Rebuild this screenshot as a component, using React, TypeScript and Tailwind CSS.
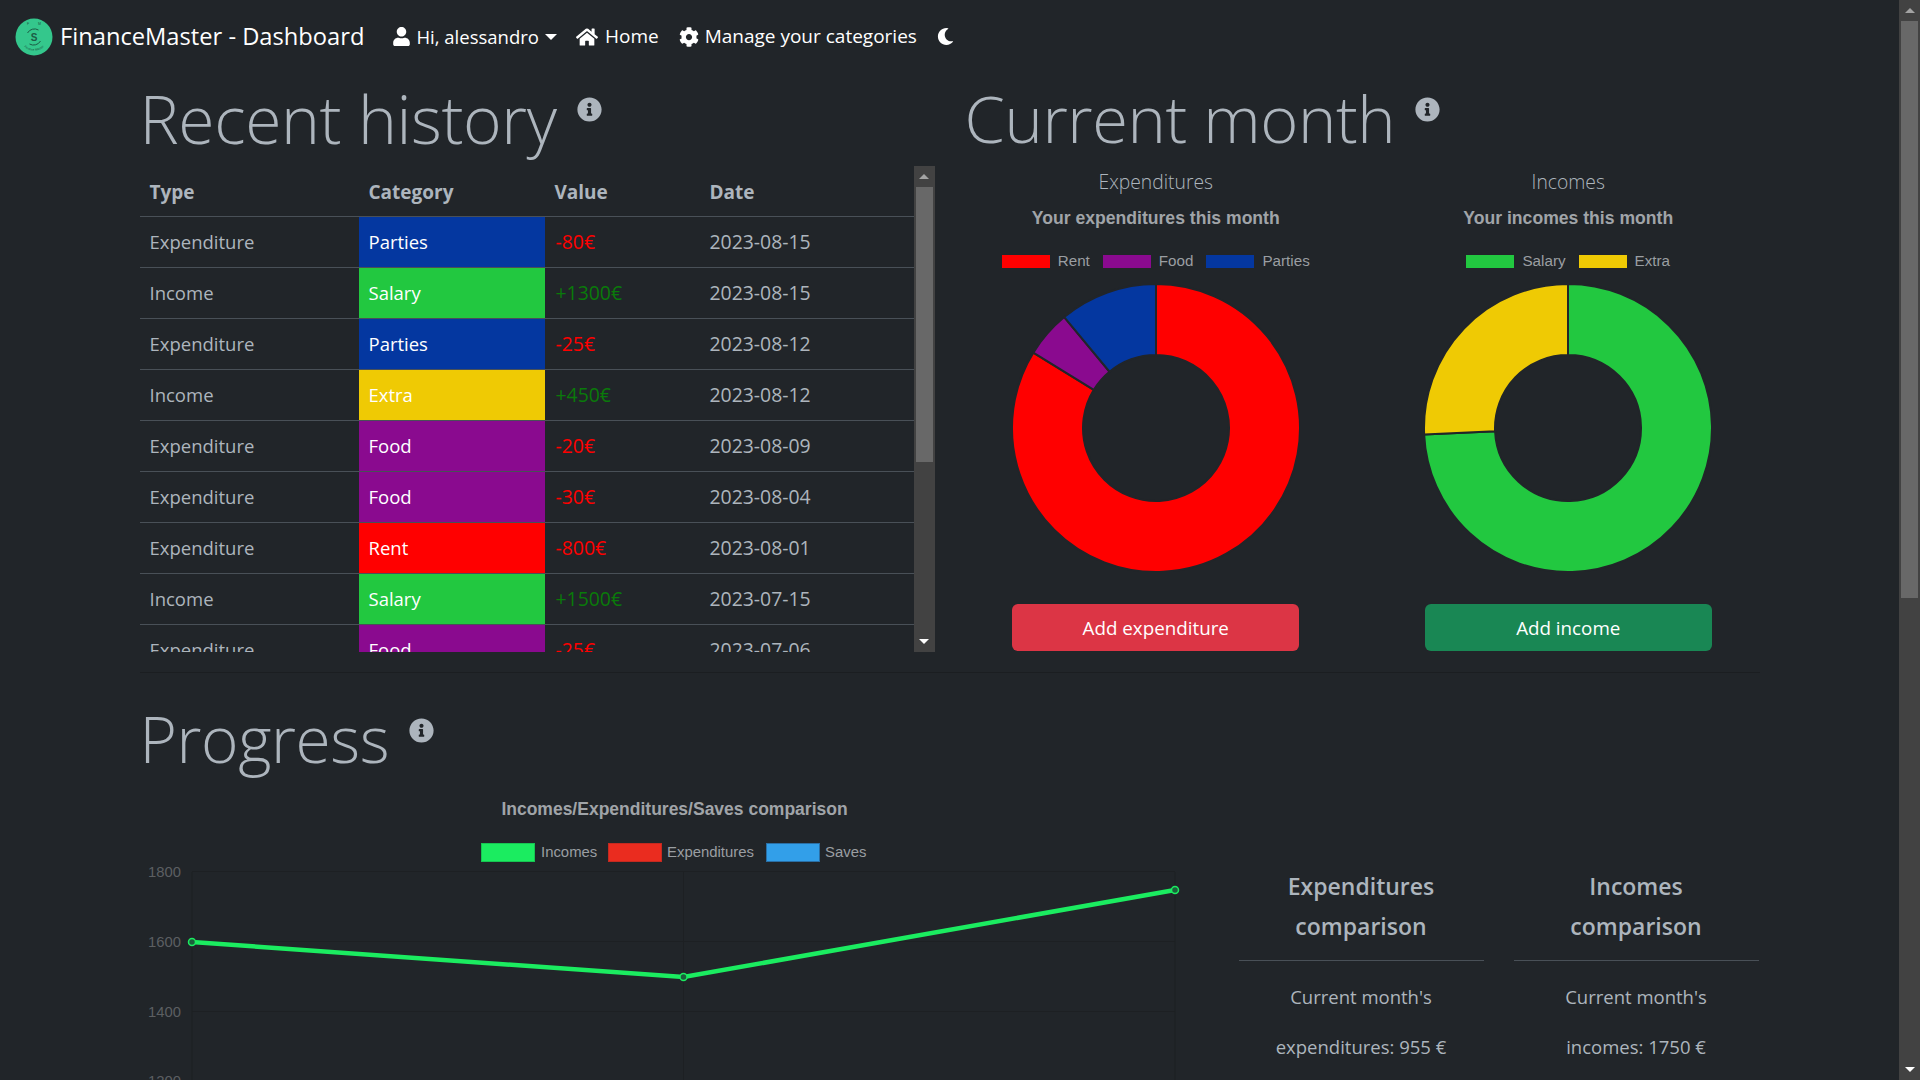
import { FaCog, FaHome, FaInfoCircle, FaMoon, FaUser } from "react-icons/fa"

const rows = [
  { type: "Expenditure", category: "Parties", color: "bg-[#0437a0]", value: "-80€", date: "2023-08-15" },
  { type: "Income", category: "Salary", color: "bg-[#22c840]", value: "+1300€", date: "2023-08-15" },
  { type: "Expenditure", category: "Parties", color: "bg-[#0437a0]", value: "-25€", date: "2023-08-12" },
  { type: "Income", category: "Extra", color: "bg-[#efca04]", value: "+450€", date: "2023-08-12" },
  { type: "Expenditure", category: "Food", color: "bg-[#8a0a8f]", value: "-20€", date: "2023-08-09" },
  { type: "Expenditure", category: "Food", color: "bg-[#8a0a8f]", value: "-30€", date: "2023-08-04" },
  { type: "Expenditure", category: "Rent", color: "bg-[#ff0000]", value: "-800€", date: "2023-08-01" },
  { type: "Income", category: "Salary", color: "bg-[#22c840]", value: "+1500€", date: "2023-07-15" },
  { type: "Expenditure", category: "Food", color: "bg-[#8a0a8f]", value: "-25€", date: "2023-07-06" },
]

const expenditures = [
  { label: "Rent", value: 800, color: "#ff0000" },
  { label: "Food", value: 50, color: "#8a0a8f" },
  { label: "Parties", value: 105, color: "#0437a0" },
]

const incomes = [
  { label: "Salary", value: 1300, color: "#22c840" },
  { label: "Extra", value: 450, color: "#efca04" },
]

type Slice = { label: string; value: number; color: string }

function arcPath(start: number, end: number, outer: number, inner: number, c: number) {
  const pt = (r: number, a: number) => `${c + r * Math.sin(a)} ${c - r * Math.cos(a)}`
  const large = end - start > Math.PI ? 1 : 0
  return `M${pt(outer, start)} A${outer} ${outer} 0 ${large} 1 ${pt(outer, end)} L${pt(inner, end)} A${inner} ${inner} 0 ${large} 0 ${pt(inner, start)} Z`
}

function Donut({ data }: { data: Slice[] }) {
  const total = data.reduce((sum, d) => sum + d.value, 0)
  let angle = 0
  return (
    <svg width="288" height="288" viewBox="0 0 288 288" className="block">
      {data.map((d) => {
        const start = angle
        angle += (d.value / total) * Math.PI * 2
        return <path key={d.label} d={arcPath(start, angle, 144, 73, 144)} fill={d.color} stroke="#212529" strokeWidth="2" />
      })}
    </svg>
  )
}

function Heading({ children, size }: { children: string; size: string }) {
  return (
    <div className="flex h-[93px] items-start text-[#adb5bd]">
      <h1 className={`leading-[90px] font-light tracking-[-0.4px] ${size}`}>{children}</h1>
      <FaInfoCircle className="mt-[24px] ml-[20px] text-[25px]" />
    </div>
  )
}

function MonthColumn({ label, title, data, button, buttonColor }: { label: string; title: string; data: Slice[]; button: string; buttonColor: string }) {
  return (
    <div className="flex flex-col items-center">
      <div className="flex h-[32px] items-center text-[19.3px] font-light text-[#adb5bd]">{label}</div>
      <div className="mt-[3px] flex h-[35px] items-center font-['Liberation_Sans',Arial,sans-serif] text-[17.6px] font-bold text-[#a0a4a8]">{title}</div>
      <div className="mt-[16px] flex h-[18px] items-center gap-[8px] font-['Liberation_Sans',Arial,sans-serif] text-[15.2px] text-[#9a9ea2]">
        {data.map((d, i) => (
          <span key={d.label} className={`flex items-center gap-[8px] ${i < data.length - 1 ? "mr-[5px]" : ""}`}>
            <span className="h-[13px] w-[48px]" style={{ background: d.color }} />
            {d.label}
          </span>
        ))}
      </div>
      <div className="mt-[14px]">
        <Donut data={data} />
      </div>
      <button className={`mt-[32px] h-[47px] w-[287px] rounded-[6px] pt-[2px] text-[18.8px] text-white ${buttonColor}`}>{button}</button>
    </div>
  )
}

function Logo() {
  return (
    <svg width="38" height="38" viewBox="0 0 38 38" className="block shrink-0">
      <circle cx="19" cy="19" r="18.5" fill="#34c78c" />
      <path d="M12.5 15a8 8 0 0 1 11-3M25.5 23a8 8 0 0 1-11 3" fill="none" stroke="#1c5b45" strokeWidth="1" />
      <text x="19" y="22.5" textAnchor="middle" fontSize="10" fontWeight="700" fill="#1c5b45" fontFamily="Liberation Sans">S</text>
      <text x="12" y="7" fontSize="3.5" fill="#1c5b45" fontFamily="Liberation Sans">F</text>
      <text x="23" y="7" fontSize="3.5" fill="#1c5b45" fontFamily="Liberation Sans">M</text>
      <path id="logo-arc" d="M5 22a14.5 14.5 0 0 0 28 0" fill="none" />
      <text fontSize="3.2" fill="#1c5b45" fontFamily="Liberation Sans">
        <textPath href="#logo-arc" startOffset="50%" textAnchor="middle">Finance Master</textPath>
      </text>
    </svg>
  )
}

function LineChart() {
  const font = "Liberation Sans, Arial, sans-serif"
  return (
    <svg width="1070" height="320" viewBox="0 0 1070 320" className="block" fontFamily={font}>
      <text x="534.5" y="16" textAnchor="middle" fontSize="17.5" fontWeight="700" fill="#a0a4a8">Incomes/Expenditures/Saves comparison</text>
      <rect x="341.5" y="44.5" width="53" height="18" fill="#1bec60" stroke="#17c552" />
      <text x="401" y="58" fontSize="14.9" fill="#9a9ea2">Incomes</text>
      <rect x="468.5" y="44.5" width="53" height="18" fill="#ea2c1f" stroke="#c42a20" />
      <text x="527" y="58" fontSize="14.9" fill="#9a9ea2">Expenditures</text>
      <rect x="626.5" y="44.5" width="53" height="18" fill="#329fe9" stroke="#2a6fa5" />
      <text x="685" y="58" fontSize="14.9" fill="#9a9ea2">Saves</text>
      {[72.5, 142.5, 212.5, 281.5].map((y) => (
        <line key={y} x1="52" x2="1035" y1={y} y2={y} stroke="#1d2023" />
      ))}
      {[52, 543.5, 1035].map((x) => (
        <line key={x} x1={x} x2={x} y1="73" y2="320" stroke="#1d2023" />
      ))}
      {[["1800", 72.5], ["1600", 142.5], ["1400", 212], ["1200", 281.5]].map(([label, y]) => (
        <text key={label} x="41" y={Number(y) + 5.5} textAnchor="end" fontSize="14.8" fill="#5c5f62">{label}</text>
      ))}
      <polyline points="52,143 543.5,178 1035,91" fill="none" stroke="#1bec60" strokeWidth="4.5" />
      {[[52, 143], [543.5, 178], [1035, 91]].map(([x, y]) => (
        <circle key={x} cx={x} cy={y} r="3.5" fill="#1c5f3c" stroke="#1bec60" strokeWidth="1.5" />
      ))}
    </svg>
  )
}

function Comparison({ title, lines }: { title: string[]; lines: string[] }) {
  return (
    <div className="w-[245px] text-center text-[#adb5bd]">
      <div className="border-b border-[#495057] pb-[14px] text-[23px] leading-[40px] font-semibold">
        {title.map((t) => <div key={t}>{t}</div>)}
      </div>
      <div className="pt-[11px] text-[18.5px] leading-[50px]">
        {lines.map((l) => <div key={l}>{l}</div>)}
      </div>
    </div>
  )
}

function Scrollbar({ thumb }: { thumb: string }) {
  return (
    <div className="flex h-full w-[21px] shrink-0 flex-col items-center bg-[#424242]">
      <div className="flex h-[21px] w-full shrink-0 items-center justify-center">
        <div className="h-0 w-0 border-x-[5px] border-b-[5px] border-x-transparent border-b-[#a3a3a3]" />
      </div>
      <div className={`w-[17px] shrink-0 bg-[#686868] ${thumb}`} />
      <div className="flex-1" />
      <div className="flex h-[21px] w-full shrink-0 items-center justify-center">
        <div className="h-0 w-0 border-x-[5px] border-t-[5px] border-x-transparent border-t-white" />
      </div>
    </div>
  )
}

export default function App() {
  return (
    <div className="flex h-screen overflow-hidden bg-[#212529] font-['Open_Sans','Noto_Sans',sans-serif]">
      <div className="min-w-0 flex-1 overflow-hidden">
        <nav className="flex h-[73px] items-center pl-[15px] text-[19px] text-white">
          <Logo />
          <span className="ml-[7px] text-[23.7px] whitespace-nowrap">FinanceMaster - Dashboard</span>
          <FaUser className="ml-[28px] text-[19px]" />
          <span className="ml-[5px] text-[18.5px]">Hi, alessandro</span>
          <span className="ml-[6px] h-0 w-0 border-x-[6px] border-t-[6px] border-x-transparent border-t-white" />
          <FaHome className="ml-[19px] text-[22px]" />
          <span className="ml-[7px]">Home</span>
          <FaCog className="ml-[20px] text-[20px]" />
          <span className="ml-[6px]">Manage your categories</span>
          <FaMoon className="ml-[20px] text-[17px]" />
        </nav>

        <main className="mx-auto w-[1620px]">
          <div className="grid grid-cols-[795px_795px] gap-x-[30px]">
            <section>
              <Heading size="text-[66px]">Recent history</Heading>
              <div className="flex h-[486px]">
                <div className="h-full flex-1 overflow-hidden">
                  <table className="w-full table-fixed border-collapse text-[18.5px] text-[#adb5bd]">
                    <thead>
                      <tr className="h-[50px] border-b border-[#495057] text-left text-[19px]">
                        <th className="w-[219px] pt-[2px] pl-[10px] font-bold">Type</th>
                        <th className="w-[186px] pt-[2px] pl-[10px] font-bold">Category</th>
                        <th className="w-[154px] pt-[2px] pl-[10px] font-bold">Value</th>
                        <th className="pt-[2px] pl-[11px] font-bold">Date</th>
                      </tr>
                    </thead>
                    <tbody>
                      {rows.map((row, i) => (
                        <tr key={i} className="h-[51px] border-b border-[#495057]">
                          <td className="pt-[1px] pl-[10px]">{row.type}</td>
                          <td className={`pt-[1px] pl-[10px] text-white ${row.color}`}>{row.category}</td>
                          <td className={`pt-[1px] pl-[11px] text-[19.4px] ${row.value.startsWith("+") ? "text-[#0a7a0a]" : "text-[#ff0000]"}`}>{row.value}</td>
                          <td className="pt-[1px] pl-[11px] text-[19.4px]">{row.date}</td>
                        </tr>
                      ))}
                    </tbody>
                  </table>
                </div>
                <Scrollbar thumb="h-[275px]" />
              </div>
            </section>
            <section>
              <Heading size="text-[65px]">Current month</Heading>
              <div className="-mx-[15px] grid grid-cols-2">
                <MonthColumn label="Expenditures" title="Your expenditures this month" data={expenditures} button="Add expenditure" buttonColor="bg-[#dc3545]" />
                <MonthColumn label="Incomes" title="Your incomes this month" data={incomes} button="Add income" buttonColor="bg-[#198754]" />
              </div>
            </section>
          </div>

          <hr className="mt-[20px] border-t border-[#1b1e21]" />

          <section className="mt-[21px]">
            <Heading size="text-[64px]">Progress</Heading>
            <div className="mt-[12px] flex">
              <LineChart />
              <div className="mt-[67px] ml-[29px] flex gap-[30px]">
                <Comparison title={["Expenditures", "comparison"]} lines={["Current month's", "expenditures: 955 €"]} />
                <Comparison title={["Incomes", "comparison"]} lines={["Current month's", "incomes: 1750 €"]} />
              </div>
            </div>
          </section>
        </main>
      </div>
      <Scrollbar thumb="h-[577px]" />
    </div>
  )
}
